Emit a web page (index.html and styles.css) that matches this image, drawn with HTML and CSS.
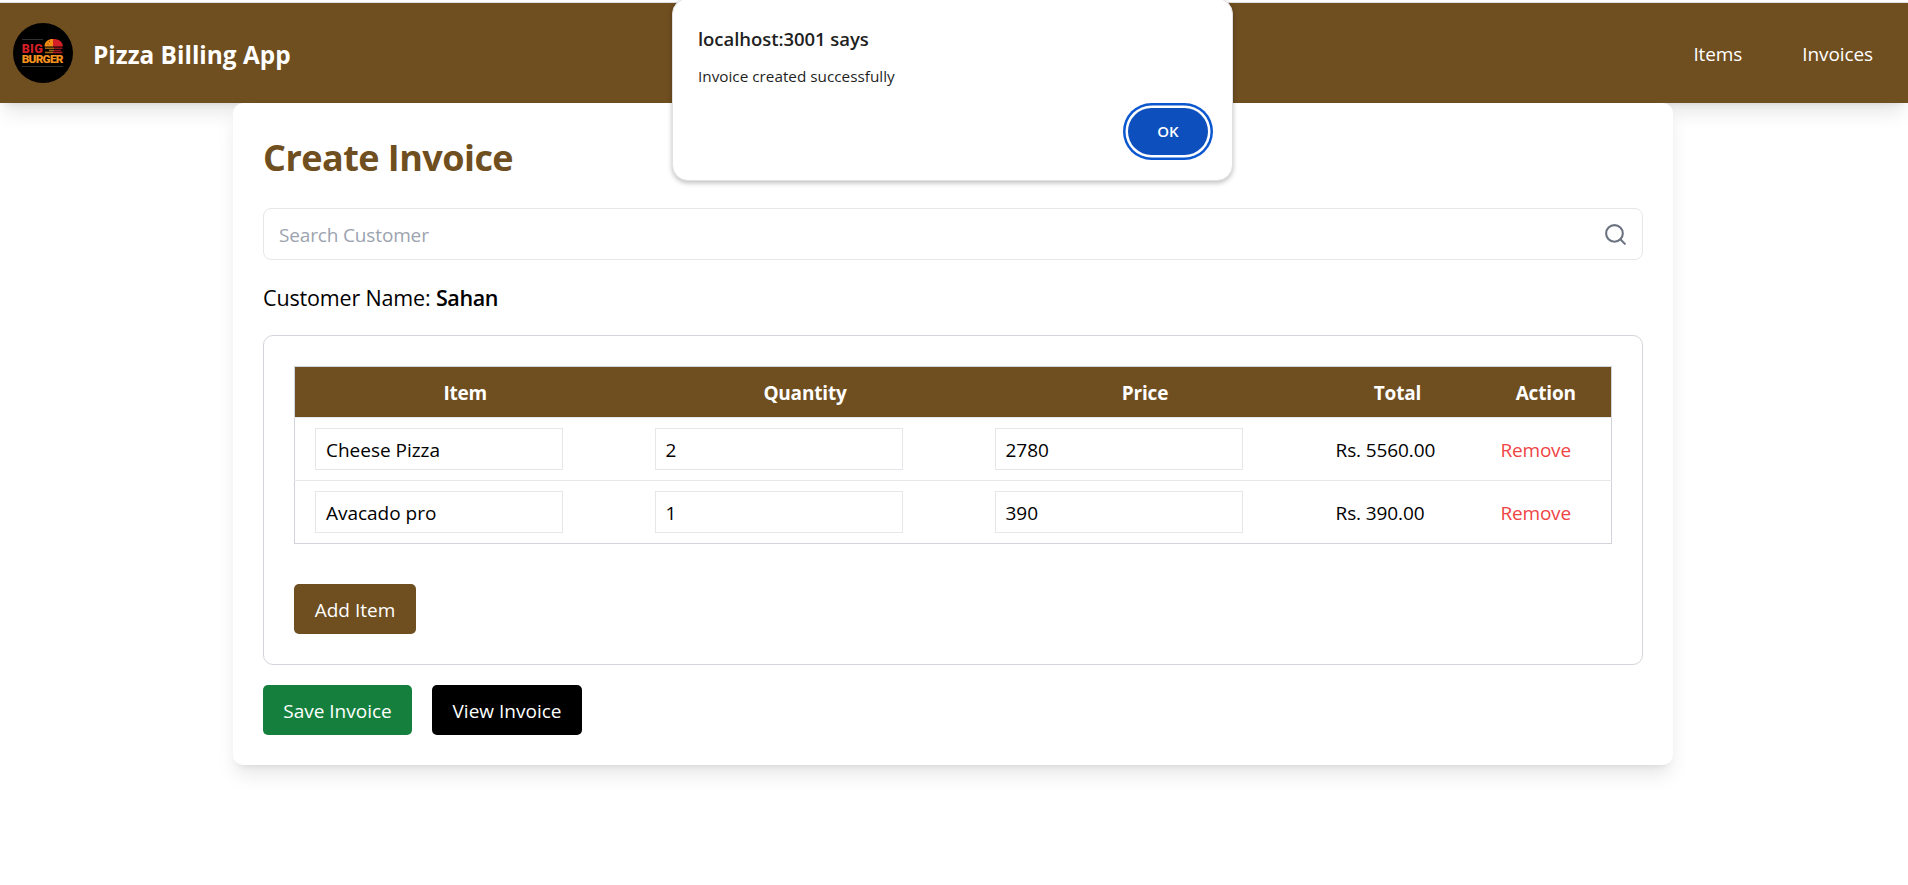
FILE: index.html
```html
<!DOCTYPE html>
<html lang="en">
<head>
<meta charset="utf-8">
<title>Pizza Billing App</title>
<link rel="stylesheet" href="styles.css">
</head>
<body>
<header class="navbar">
  <div class="brand">
    <svg class="logo" viewBox="0 0 60 60">
      <circle cx="30" cy="30" r="30" fill="#000"/>
      <path d="M9 16.500H30M9 43.500H50" stroke="#3c3c3c" stroke-width="0.800"/>
      <text x="8.700" y="29.600" class="logo-big">BIG</text>
      <text x="8.700" y="39.900" class="logo-burger">BURGER</text>
      <path d="M31.500 23.500c0-5 3.500-7.500 8.500-7.500v7.500z" fill="#f28c13"/>
      <path d="M40 16c6 0 9.800 2.500 9.800 7.500H40z" fill="#d41f26"/>
      <path d="M36 18.500h1M34.500 21h1" stroke="#7a3d08" stroke-width="1"/>
      <path d="M32 25.300h9M36 27.400h5" stroke="#9a6216" stroke-width="1.500"/>
      <path d="M41 25.300h8.500M41 27.400h7" stroke="#8c181c" stroke-width="1.500"/>
      <path d="M32 29.500h8" stroke="#a8660f" stroke-width="1.600"/>
      <path d="M40 29.500h9.500" stroke="#b01c20" stroke-width="1.600"/>
    </svg>
    <h1 class="brand-name">Pizza Billing App</h1>
  </div>
  <nav class="links"><a class="link">Items</a><a class="link">Invoices</a></nav>
</header>

<main class="card">
  <h2 class="title">Create Invoice</h2>
  <div class="search">
    <span class="placeholder">Search Customer</span>
    <svg class="search-icon" viewBox="0 0 24 24"><circle cx="11" cy="11" r="8"/><path d="M21 21l-4.350-4.350"/></svg>
  </div>
  <p class="customer"><span class="customer-label">Customer Name:</span> <strong class="customer-name">Sahan</strong></p>
  <section class="items">
    <table class="table">
      <colgroup><col class="c-wide"><col class="c-wide"><col class="c-wide"><col class="c-total"><col class="c-action"></colgroup>
      <thead><tr><th>Item</th><th>Quantity</th><th>Price</th><th>Total</th><th>Action</th></tr></thead>
      <tbody>
        <tr><td><div class="field">Cheese Pizza</div></td><td><div class="field">2</div></td><td><div class="field">2780</div></td><td>Rs. 5560.00</td><td><a class="remove">Remove</a></td></tr>
        <tr><td><div class="field">Avacado pro</div></td><td><div class="field">1</div></td><td><div class="field">390</div></td><td>Rs. 390.00</td><td><a class="remove">Remove</a></td></tr>
      </tbody>
    </table>
    <button class="btn btn-add">Add Item</button>
  </section>
  <div class="actions">
    <button class="btn btn-save">Save Invoice</button>
    <button class="btn btn-view">View Invoice</button>
  </div>
</main>

<div class="dialog">
  <div class="dialog-title">localhost:3001 says</div>
  <div class="dialog-text">Invoice created successfully</div>
  <button class="ok">OK</button>
</div>
</body>
</html>
```
FILE: styles.css
```css
* { box-sizing: border-box; margin: 0; padding: 0; }
body { min-height: 885px; font-family: "Open Sans", "Segoe UI", sans-serif; font-size: 19px; line-height: 30px; color: #000; background: #fff; border-top: 2px solid #fff; }
.navbar { height: 101px; border-top: 1px solid #dedfe3; background: #6f4e20; color: #fff; display: flex; align-items: center; justify-content: space-between; padding: 0 35px 0 13px; box-shadow: 0 12.500px 18.750px -3.750px rgba(0,0,0,.1), 0 5px 7.500px -5px rgba(0,0,0,.1); }
.brand { display: flex; align-items: center; gap: 20px; }
.logo { width: 60px; height: 60px; }
.logo-big, .logo-burger { font-family: Roboto, sans-serif; font-weight: 900; font-size: 12.500px; letter-spacing: .300px; fill: #d41f26; }
.logo-burger { font-size: 11.800px; letter-spacing: -.750px; fill: #f6921e; }
.brand-name { font-size: 24.400px; line-height: 35px; font-weight: 700; padding-top: 2px; }
.links { display: flex; gap: 60px; padding-top: 2px; }
.link { letter-spacing: -.100px; }
.card { width: 1440px; margin-left: 233px; height: 662px; background: #fff; border-radius: 10px; padding: 30px; box-shadow: 0 12.500px 18.750px -3.750px rgba(0,0,0,.1), 0 5px 7.500px -5px rgba(0,0,0,.1); }
.title { font-size: 36px; line-height: 45px; font-weight: 700; letter-spacing: -.540px; color: #6f4e20; padding-top: 2px; margin-bottom: 28px; }
.search { height: 52px; border: 1px solid #e5e7eb; border-radius: 8px; padding: 0 14px 0 15px; display: flex; align-items: center; justify-content: space-between; color: #9ca3af; }
.placeholder { padding-top: 2px; letter-spacing: -.150px; }
.search-icon { width: 25px; height: 25px; fill: none; stroke: #6b7280; stroke-width: 2; stroke-linecap: round; }
.customer { font-size: 21.500px; line-height: 35px; margin: 20px 0; letter-spacing: -.160px; }
.customer-name { font-weight: 600; letter-spacing: -.400px; }
.items { border: 1px solid #d1d5db; border-radius: 10px; padding: 30px; height: 330px; }
.table { table-layout: fixed; width: 1318px; border-collapse: collapse; border: 1px solid #d1d5db; margin-bottom: 40px; }
.c-wide { width: 340px; }
.c-total { width: 165px; }
.c-action { width: 132px; }
.table th { background: #6f4e20; color: #fff; height: 51px; padding: 2px 0 0 1px; font-weight: 700; letter-spacing: -.180px; text-align: center; }
.table td { height: 63px; padding: 2px 19px 0 21px; border-top: 1px solid #e5e7eb; letter-spacing: -.100px; }
.table td:has(.field) { padding: 0 20px; }
.field { width: 248px; height: 42px; border: 1px solid #e5e7eb; padding: 6px 10px 4px; letter-spacing: -.020px; }
.remove { color: #ef4444; letter-spacing: -.200px; }
.btn { font: inherit; color: #fff; border: 0; border-radius: 5px; height: 50px; padding-top: 1px; display: block; }
.btn-add { width: 122px; background: #6f4e20; }
.actions { display: flex; gap: 20px; margin-top: 20px; }
.btn-save { width: 149px; background: #15803d; }
.btn-view { width: 150px; background: #000; }
.dialog { position: absolute; left: 672px; top: -2px; width: 561px; height: 183px; padding: 25px 24px 0 25px; background: #fff; border: 1px solid #e0e1e0; border-radius: 16px; box-shadow: 0 2px 5px rgba(0,0,0,.26); color: #1f1f1f; display: flex; flex-direction: column; }
.dialog-title { font-size: 18.500px; line-height: 30px; font-weight: 600; letter-spacing: -.050px; }
.dialog-text { font-size: 15.300px; line-height: 24px; margin-top: 10px; }
.ok { align-self: flex-end; margin-top: 20px; width: 80px; height: 47px; border: 0; border-radius: 23.500px; background: #0d50bd; color: #fff; font: 600 15px/47px "Open Sans", sans-serif; box-shadow: 0 0 0 2.500px #fff, 0 0 0 5px #0b57d0; }
```
